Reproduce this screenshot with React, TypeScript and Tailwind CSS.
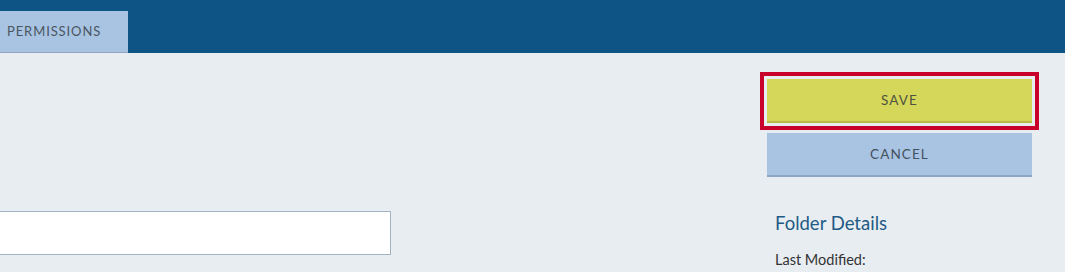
export default function App() {
  return (
    <div className="min-h-screen w-full bg-[#e8edf1] font-['Lato',sans-serif] overflow-hidden">
      <div className="h-[53px] bg-[#0e5586] pt-[11px] flex">
        <div className="w-[128px] h-[42px] bg-[#a8c4e2] border-b border-[#8ea6c2] flex items-center pl-[7px]">
          <span className="text-[13px] tracking-[0.9px] text-[#4a5561]">PERMISSIONS</span>
        </div>
      </div>

      <div className="flex">
        <div className="flex-1 pt-[158px]">
          <input
            type="text"
            className="block -ml-[10px] w-[401px] h-[44px] bg-white border border-[#a3b3c3] outline-none"
          />
        </div>

        <div className="w-[279px] mr-[26px] pt-[19px] flex flex-col">
          <div className="border-4 border-[#c8002a] p-[3px]">
            <button className="w-full h-[44px] bg-[#d5d75a] border-b-2 border-[#b9ba47] text-[13.5px] tracking-[1.1px] text-[#4f5340]">
              SAVE
            </button>
          </div>
          <div className="px-[7px] pt-[3px]">
            <button className="w-full h-[44px] bg-[#a8c4e2] border-b-2 border-[#8ea6c2] text-[13.5px] tracking-[1.1px] text-[#44515f]">
              CANCEL
            </button>
          </div>
          <div className="px-[15px] pt-[34px]">
            <div className="text-[18.5px] leading-[24px] text-[#1f5a85]">Folder Details</div>
            <div className="mt-[16px] text-[14.5px] leading-[18px] text-[#333]">Last Modified:</div>
          </div>
        </div>
      </div>
    </div>
  );
}
